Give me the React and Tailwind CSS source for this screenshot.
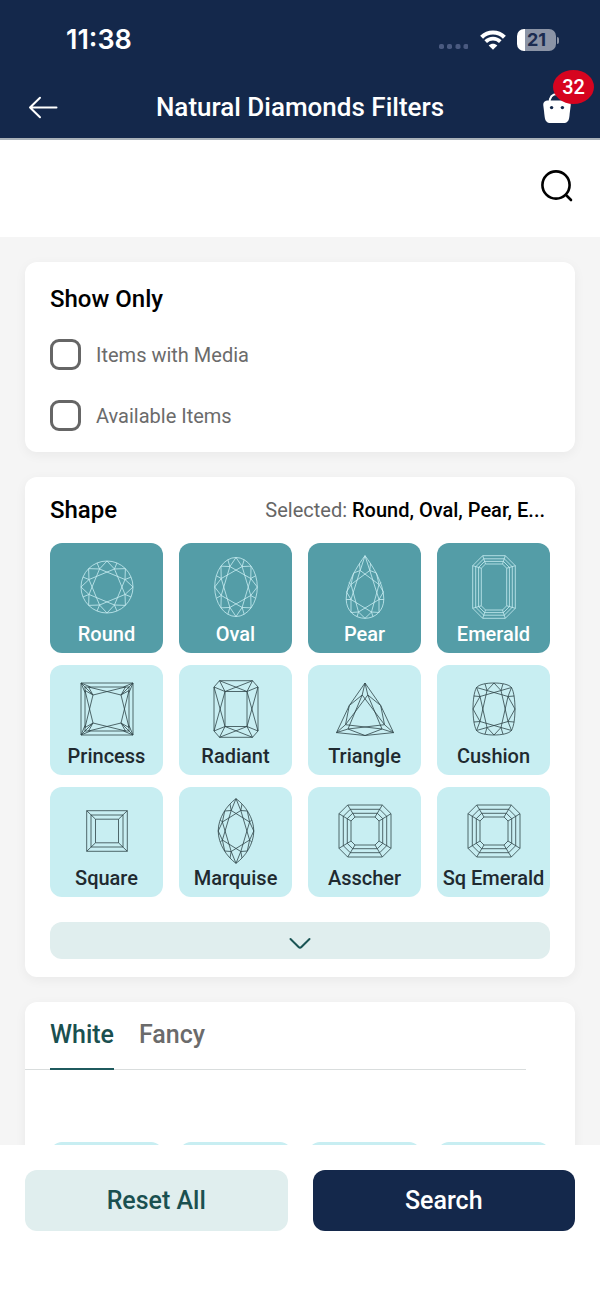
import { useState } from "react";

const poly = (pts) => "M" + pts.map((p) => p.join(" ")).join("L") + "Z";
const line = (a, b) => `M${a[0]} ${a[1]}L${b[0]} ${b[1]}`;

// Brilliant cut: eight girdle points, eight inner points lying between them.
function brilliant(outer, inner, mids) {
  let d = "";
  for (let i = 0; i < 8; i++) {
    d += line(outer[i], inner[i]);
    d += line(outer[(i + 1) % 8], inner[i]);
    d += line(inner[i], inner[(i + 2) % 8]);
    d += line(inner[i], mids[i]);
  }
  return d;
}

function ring(rx, ry, offset) {
  return Array.from({ length: 8 }, (_, i) => {
    const a = ((i * 45 + offset - 90) * Math.PI) / 180;
    return [+(rx * Math.cos(a)).toFixed(2), +(ry * Math.sin(a)).toFixed(2)];
  });
}

const ellipseCut = (rx, ry) =>
  `M0 ${-ry}A${rx} ${ry} 0 1 1 0 ${ry}A${rx} ${ry} 0 1 1 0 ${-ry}Z` +
  brilliant(ring(rx, ry, 0), ring(rx * 0.75, ry * 0.75, 22.5), ring(rx, ry, 22.5));

// Step cut: nested octagons given as [half width, half height, corner cut].
function stepCut(steps) {
  const rings = steps.map(([w, h, c]) => [
    [-w + c, -h], [w - c, -h], [w, -h + c], [w, h - c],
    [w - c, h], [-w + c, h], [-w, h - c], [-w, -h + c],
  ]);
  const last = rings[rings.length - 1];
  return rings.map(poly).join("") + rings[0].map((p, i) => line(p, last[i])).join("");
}

// Repeats segments drawn for the top-left quarter in all four quarters.
function mirrored(segments) {
  let d = "";
  for (const sx of [1, -1])
    for (const sy of [1, -1])
      for (const [a, b] of segments)
        d += line([a[0] * sx, a[1] * sy], [b[0] * sx, b[1] * sy]);
  return d;
}

const asscher = stepCut([[26, 26, 8.7], [21.7, 21.7, 7], [17.7, 17.7, 5.3], [14, 14, 4]]);

const CUTS = {
  Round: ellipseCut(26, 26),
  Oval: ellipseCut(21.3, 29.5),
  Pear:
    "M0 -31.3C7 -22 18.8 -4 18.8 12C18.8 24 10 31.3 0 31.3C-10 31.3 -18.8 24 -18.8 12C-18.8 -4 -7 -22 0 -31.3Z" +
    brilliant(
      [[0, -31.3], [11.4, -14], [18.4, 5], [14, 25.5], [0, 31.3], [-14, 25.5], [-18.4, 5], [-11.4, -14]],
      [[4.8, -16.5], [14, -2.5], [14, 12.5], [6.5, 25], [-6.5, 25], [-14, 12.5], [-14, -2.5], [-4.8, -16.5]],
      [[5.5, -23.5], [16, -4.5], [18.8, 12.5], [8, 29.8], [-8, 29.8], [-18.8, 12.5], [-16, -4.5], [-5.5, -23.5]],
    ),
  Emerald: stepCut([[21.3, 31.3, 10], [18.3, 28.2, 8], [15.4, 25.6, 6], [12.7, 23, 4.2]]),
  Princess:
    "M-26 -26H26V26H-26ZM-22 -22H22V22H-22Z" +
    mirrored([
      [[-26, -26], [-14, -14]],
      [[-26, -26], [-16.5, -22]],
      [[-26, -26], [-22, -16.5]],
      [[-18.5, -22], [-14, -14]],
      [[-22, -18.5], [-14, -14]],
      [[-18.5, -22], [14, -14]],
      [[-22, -18.5], [-14, 14]],
    ]),
  Radiant:
    "M-16.5 -28.3H16.5L22 -22V22L16.5 28.3H-16.5L-22 22V-22ZM-11 -17.5H11V17.5H-11Z" +
    mirrored([
      [[-16.5, -28.3], [-11, -17.5]],
      [[-22, -22], [-11, -17.5]],
      [[-16.5, -28.3], [11, -17.5]],
      [[-22, -22], [-11, 17.5]],
    ]),
  Triangle:
    "M0 -26L-15.7 -3.5L-28.5 23.6L0 26.5L28.5 23.6L15.7 -3.5Z" +
    "M0 -26L-2.8 -14L-15.7 -3.5L-19.5 15.7L-28.5 23.6L-17 20L0 26.5L17 20L28.5 23.6L19.5 15.7L15.7 -3.5L2.8 -14Z" +
    "M2.8 -14L-19.5 15.7L17 20M-2.8 -14L-17 20L19.5 15.7M-2.8 -14L19.5 15.7M2.8 -14L17 20",
  Cushion:
    "M0 -26C8 -26 15 -24.5 17.5 -21.5C20 -17 21 -8 21 0C21 8 20 17 17.5 21.5C15 24.5 8 26 0 26C-8 26 -15 24.5 -17.5 21.5C-20 17 -21 8 -21 0C-21 -8 -20 -17 -17.5 -21.5C-15 -24.5 -8 -26 0 -26Z" +
    brilliant(
      [[0, -26], [17.5, -21.5], [21, 0], [17.5, 21.5], [0, 26], [-17.5, 21.5], [-21, 0], [-17.5, -21.5]],
      [[7, -18.5], [14, -12.5], [14, 12.5], [7, 18.5], [-7, 18.5], [-14, 12.5], [-14, -12.5], [-7, -18.5]],
      [[9, -25.3], [20.2, -13], [20.2, 13], [9, 25.3], [-9, 25.3], [-20.2, 13], [-20.2, -13], [-9, -25.3]],
    ),
  Square:
    "M-20.3 -20.3H20.3V20.3H-20.3ZM-16 -16H16V16H-16ZM-11.5 -11.8H11.5V11.8H-11.5Z" +
    mirrored([[[-20.3, -20.3], [-11.5, -11.8]]]),
  Marquise:
    "M0 -32.3C9 -26 17.8 -13 17.8 0C17.8 13 9 26 0 32.3C-9 26 -17.8 13 -17.8 0C-17.8 -13 -9 -26 0 -32.3Z" +
    brilliant(
      [[0, -32.3], [11.3, -20], [17.8, 0], [11.3, 20], [0, 32.3], [-11.3, 20], [-17.8, 0], [-11.3, -20]],
      [[4.8, -20.5], [13.6, -9], [13.6, 9], [4.8, 20.5], [-4.8, 20.5], [-13.6, 9], [-13.6, -9], [-4.8, -20.5]],
      [[6, -27], [15.6, -11], [15.6, 11], [6, 27], [-6, 27], [-15.6, 11], [-15.6, -11], [-6, -27]],
    ),
  Asscher: asscher,
  "Sq Emerald": asscher,
};

function StatusBar() {
  return (
    <div className="flex h-[76px] items-center justify-between pl-[66px] pr-[41px] pt-1">
      <span className="font-['Inter',sans-serif] text-[27px] font-semibold leading-8">11:38</span>
      <div className="flex items-center">
        <svg width="32" height="20" viewBox="0 0 32 20" className="mr-3 fill-[#4a5a80]" aria-hidden="true">
          <rect x="3" y="14" width="5" height="5" rx="1.8" />
          <rect x="11" y="14" width="5" height="5" rx="1.8" />
          <rect x="19.5" y="14" width="5" height="5" rx="1.8" />
          <rect x="27.5" y="14" width="5" height="5" rx="1.8" />
        </svg>
        <svg width="26" height="20" viewBox="0 0 26 20" className="mr-[11px] fill-none stroke-white" aria-hidden="true">
          <path d="M1.6 7.2C8 0.900 18 0.900 24.400 7.200" strokeWidth="4.2" />
          <path d="M5.700 11.700C10 7.700 16 7.700 20.300 11.700" strokeWidth="3.8" />
          <path d="M13 19.800L8.700 15.500C11.200 13.200 14.800 13.200 17.300 15.500Z" className="fill-white stroke-none" />
        </svg>
        <div className="flex items-center">
          <div className="flex h-[22px] w-[39px] items-center justify-center rounded-[7px] bg-linear-to-r from-white from-[21%] to-[#8b94a6] to-[21%] text-[18px] font-bold leading-none text-[#1b2c50]">
            <span className="font-['Inter',sans-serif]">21</span>
          </div>
          <div className="ml-px h-[7px] w-[2px] rounded-r-full bg-[#8b94a6]" />
        </div>
      </div>
    </div>
  );
}

function NavBar() {
  return (
    <div className="grid h-[62px] grid-cols-[60px_1fr_60px] items-center">
      <button type="button" aria-label="Back" className="pl-7">
        <svg width="30" height="24" viewBox="0 0 30 24" className="fill-none stroke-white" strokeWidth="2" strokeLinecap="round" strokeLinejoin="round">
          <path d="M28.500 12.500H2M12 2.700L2 12.500L12 22.300" />
        </svg>
      </button>
      <h1 className="text-center text-[26px] font-medium leading-8">Natural Diamonds Filters</h1>
      <button type="button" aria-label="Cart, 32 items" className="relative">
        <svg width="30" height="34" viewBox="0 0 30 34" className="ml-[2px] fill-none">
          <path d="M7.600 13C7.600 7 10 4 15 4S22.400 7 22.400 13" className="stroke-white" strokeWidth="2" />
          <path d="M6.500 10.500H23.500C27.300 10.500 29 12.300 28.700 15.300L27.300 27C26.800 31 25 33 21.500 33H8.500C5 33 3.200 31 2.700 27L1.300 15.300C1 12.300 2.700 10.500 6.500 10.500Z" className="fill-white" />
          <circle cx="9.600" cy="17.600" r="1.700" className="fill-[#14284b]" />
          <circle cx="20.400" cy="17.600" r="1.700" className="fill-[#14284b]" />
        </svg>
        <span className="absolute -top-5 right-[6px] flex h-[34px] w-[41px] items-center justify-center rounded-[50%] bg-[#d6041f] text-xl font-medium leading-none">
          32
        </span>
      </button>
    </div>
  );
}

function Card({ className, children }) {
  return (
    <section className={`rounded-xl bg-white shadow-[0_3px_12px_rgba(0,0,0,0.05)] ${className}`}>
      {children}
    </section>
  );
}

function CheckRow({ label }) {
  return (
    <label className="flex items-center gap-[15px] text-xl text-[#6b6b6b]">
      <input
        type="checkbox"
        className="size-[31px] appearance-none rounded-[9px] border-3 border-[#666] checked:bg-[#559da7]"
      />
      {label}
    </label>
  );
}

function ShapeTile({ name, selected, onToggle }) {
  return (
    <button
      type="button"
      aria-pressed={selected}
      onClick={onToggle}
      className={`flex h-[110px] flex-col items-center rounded-xl pt-[11px] ${
        selected ? "bg-[#549da7] text-white" : "bg-[#c8eef2] text-[#1f2a30]"
      }`}
    >
      <svg
        width="66"
        height="66"
        viewBox="-33 -33 66 66"
        className={`shrink-0 fill-none ${selected ? "stroke-[#c9eef3]" : "stroke-[#2f4448]"}`}
        strokeWidth="0.8"
        strokeLinejoin="round"
        aria-hidden="true"
      >
        <path d={CUTS[name]} />
      </svg>
      <span className="whitespace-nowrap text-xl font-medium leading-7">{name}</span>
    </button>
  );
}

export default function App() {
  const [selected, setSelected] = useState(["Round", "Oval", "Pear", "Emerald"]);
  const [tab, setTab] = useState("White");

  const toggle = (name) =>
    setSelected((s) => (s.includes(name) ? s.filter((n) => n !== name) : [...s, name]));

  const joined = selected.join(", ");
  const summary = joined.length > 23 ? joined.slice(0, 20) + "..." : joined;

  return (
    <div className="flex h-screen flex-col bg-white font-['Roboto',sans-serif] text-black">
      <header className="shrink-0 border-b-2 border-[#a9b1b8] bg-[#14284b] text-white">
        <StatusBar />
        <NavBar />
      </header>

      <div className="flex h-[97px] shrink-0 items-center justify-end pb-[5px] pr-[26px]">
        <button type="button" aria-label="Search by text">
          <svg width="34" height="34" viewBox="0 0 34 34" className="fill-none stroke-black" strokeWidth="2.6" strokeLinecap="round">
            <circle cx="16" cy="16" r="13.6" />
            <path d="M26.500 26.500L31 31" />
          </svg>
        </button>
      </div>

      <main className="flex min-h-0 flex-1 flex-col gap-[25px] overflow-y-auto bg-[#f5f5f5] p-[25px] [scrollbar-width:none]">
        <Card className="shrink-0 px-[25px] pb-[21px] pt-[22px]">
          <h2 className="text-2xl font-medium leading-[30px]">Show Only</h2>
          <div className="mt-[25px] flex flex-col gap-[30px]">
            <CheckRow label="Items with Media" />
            <CheckRow label="Available Items" />
          </div>
        </Card>

        <Card className="shrink-0 px-[25px] py-[18px]">
          <div className="flex items-center justify-between pr-[5px]">
            <h2 className="text-2xl font-medium leading-[30px]">Shape</h2>
            <p className="text-xl leading-[30px] text-[#666]">
              Selected: <span className="font-medium text-black">{summary}</span>
            </p>
          </div>
          <div className="mt-[18px] grid grid-cols-4 gap-x-4 gap-y-3">
            {Object.keys(CUTS).map((name) => (
              <ShapeTile
                key={name}
                name={name}
                selected={selected.includes(name)}
                onToggle={() => toggle(name)}
              />
            ))}
          </div>
          <button
            type="button"
            aria-label="Show more shapes"
            className="mt-[25px] flex h-[37px] w-full items-center justify-center rounded-xl bg-[#e0eeee]"
          >
            <svg width="22" height="14" viewBox="0 0 22 14" className="mt-1 fill-none stroke-[#1a5454]" strokeWidth="2" strokeLinecap="round" strokeLinejoin="round">
              <path d="M1.500 3L9.600 11Q11 12.400 12.400 11L20.500 3" />
            </svg>
          </button>
        </Card>

        <Card className="shrink-0 pb-[25px]">
          <div role="tablist" className="mr-[49px] flex gap-[25px] border-b border-[#d9dddd] pl-[25px]">
            {["White", "Fancy"].map((name) => (
              <button
                key={name}
                type="button"
                role="tab"
                aria-selected={tab === name}
                onClick={() => setTab(name)}
                className={`-mb-px h-[68px] border-b-2 text-[25px] font-medium ${
                  tab === name ? "border-[#1f5a5e] text-[#1a5050]" : "border-transparent text-[#6b6b6b]"
                }`}
              >
                {name}
              </button>
            ))}
          </div>
          <div className="mt-[72px] grid grid-cols-4 gap-4 px-[25px]">
            {["D", "E", "F", "G"].map((grade) => (
              <button key={grade} type="button" aria-label={grade} className="h-[50px] rounded-xl bg-[#c8eef2]" />
            ))}
          </div>
        </Card>
      </main>

      <footer className="grid shrink-0 grid-cols-2 gap-[25px] bg-white px-[25px] pb-[68px] pt-[25px] text-[25px] font-medium">
        <button type="button" className="h-[61px] rounded-xl bg-[#e0eeee] text-[#1a5050]">
          Reset All
        </button>
        <button type="button" className="h-[61px] rounded-xl bg-[#14284b] text-white">
          Search
        </button>
      </footer>
    </div>
  );
}
